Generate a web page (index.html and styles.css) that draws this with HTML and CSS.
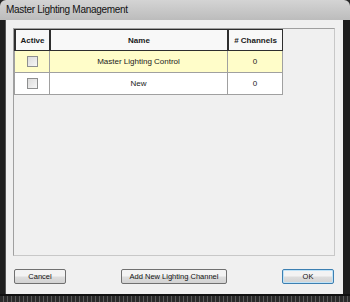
FILE: index.html
```html
<!DOCTYPE html>
<html lang="en">
<head>
    <meta charset="UTF-8">
    <title>Master Lighting Management</title>
    <link rel="stylesheet" href="styles.css">
</head>
<body>
    <div class="window">
        <!-- Title bar -->
        <div class="titlebar">Master Lighting Management</div>

        <div class="client">
            <!-- Channel grid -->
            <div class="grid">
                <div class="row head">
                    <div class="cell">Active</div>
                    <div class="cell">Name</div>
                    <div class="cell"># Channels</div>
                </div>
                <div class="row current">
                    <div class="cell"><span class="check"></span></div>
                    <div class="cell">Master Lighting Control</div>
                    <div class="cell">0</div>
                </div>
                <div class="row">
                    <div class="cell"><span class="check"></span></div>
                    <div class="cell">New</div>
                    <div class="cell">0</div>
                </div>
            </div>

            <!-- Buttons -->
            <div class="buttons">
                <button class="button small">Cancel</button>
                <button class="button wide">Add New Lighting Channel</button>
                <button class="button small default">OK</button>
            </div>
        </div>
        <div class="bottom"></div>
    </div>
</body>
</html>
```

FILE: styles.css
```css
body {
    margin: 0;
    background-color: #262626;
    font-family: "Liberation Sans", Arial, sans-serif;
}
.window {
    width: 350px;
    height: 302px;
    display: flex;
    flex-direction: column;
    background-color: #1f1f1f;
    border-radius: 6px 6px 0 0;
    overflow: hidden;
}
.titlebar {
    height: 20px;
    line-height: 20px;
    padding-left: 6px;
    font-size: 10px;
    letter-spacing: -0.3px;
    color: #111;
    background: linear-gradient(#d4d4d4, #bcbcbc);
}
.client {
    flex: 1;
    display: flex;
    flex-direction: column;
    margin: 0 7px 0 5px;
    padding: 8px 8px 0 7px;
    background-color: #f0f0f0;
    border-left: 1px solid #555;
}
.grid {
    height: 228px;
    box-sizing: border-box;
    border: 1px solid #a0a0a0;
    border-right-color: #c8c8c8;
    border-bottom-color: #c8c8c8;
    background-color: #f0f0f0;
}
.row {
    display: grid;
    grid-template-columns: 36px 178px 55px;
    width: fit-content;
    height: 22px;
    font-size: 8px;
    color: #1a1a1a;
    background-color: #fff;
}
.row .cell {
    display: flex;
    align-items: center;
    justify-content: center;
    border-right: 1px solid #a0a0a0;
    border-bottom: 1px solid #a0a0a0;
}
.row .cell:first-child {
    border-left: 1px solid #a0a0a0;
}
.row.current {
    background-color: #fffdc9;
}
.row.head {
    font-weight: bold;
    background-color: #f8f8f8;
}
.row.head .cell {
    border: 1px solid #2e2e2e;
    border-left-width: 0;
    box-sizing: border-box;
}
.row.head .cell:first-child {
    border-left: 2px solid #2e2e2e;
}
.row.head .cell + .cell {
    border-left: 1px solid #2e2e2e;
}
.check {
    width: 9px;
    height: 9px;
    border: 1px solid #8e8f8f;
    background: linear-gradient(135deg, #dcdcdc, #f6f6f6);
}
.buttons {
    display: flex;
    justify-content: space-between;
    margin: 13px 1px 0 1px;
}
.button {
    height: 15px;
    padding: 0;
    font-family: "Liberation Sans", Arial, sans-serif;
    font-size: 7.5px;
    color: #111;
    background: linear-gradient(#f3f3f3 45%, #dddddd 55%, #d2d2d2);
    border: 1px solid #707070;
    border-radius: 2px;
}
.button.small {
    width: 52px;
}
.button.wide {
    width: 106px;
}
.button.default {
    border-color: #3c7fb1;
    box-shadow: inset 0 0 0 1px #bfe3f8;
}
.bottom {
    height: 8px;
    background: repeating-linear-gradient(90deg, #2a2a2a 0 3px, #5a5a5a 3px 4px);
    border-top: 2px solid #111;
    box-sizing: border-box;
}
```
